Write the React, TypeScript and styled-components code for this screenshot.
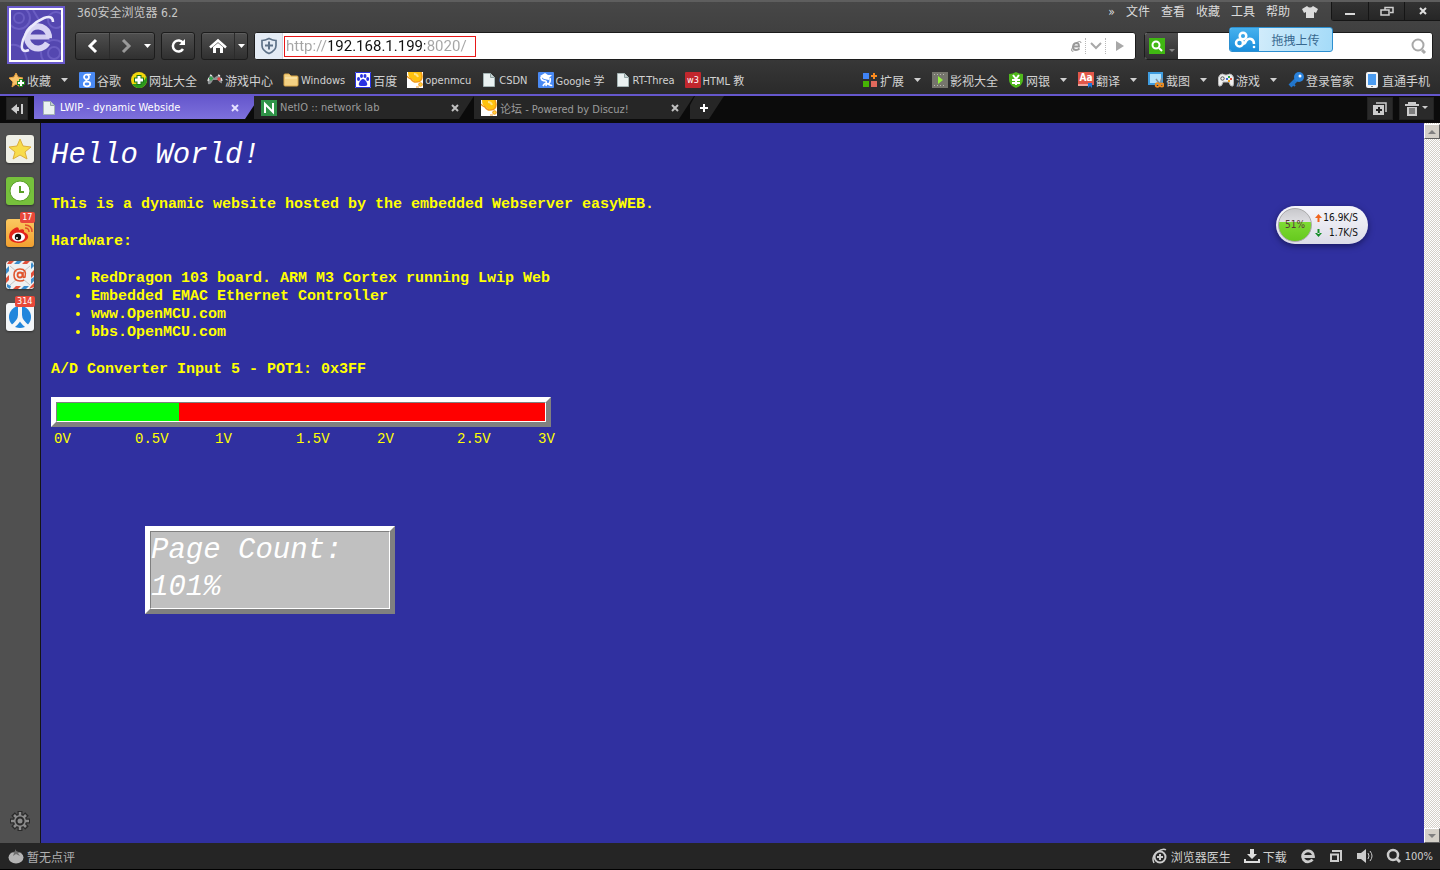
import React from "react";
import styled, { createGlobalStyle, css } from "styled-components";

const UI_FONT = `"DejaVu Sans Condensed", "Noto Sans CJK SC", sans-serif`;
const MONO_FONT = `"Liberation Mono", monospace`;

const GlobalStyle = createGlobalStyle`
  * { box-sizing: border-box; }
  body { margin: 0; background: #0b0b0b; font-family: ${UI_FONT}; font-size: 12px; color: #d4d4d4; }
  button, input { font: inherit; color: inherit; margin: 0; padding: 0; border: 0; background: none; outline: 0; }
  button { display: flex; align-items: center; justify-content: center; }
  a { color: inherit; text-decoration: none; }
  svg { display: block; flex: none; }
`;

/* ---------- window frame ---------- */

const Window = styled.div`
  display: flex;
  flex-direction: column;
  min-height: 100vh;
`;

const Header = styled.header`
  height: 96px;
  display: flex;
  flex-direction: column;
  position: relative;
  background: linear-gradient(#474747, #3c3c3c 50%, #2a2a2a);
  border-top: 2px solid #5e5e5e;
  border-bottom: 2px solid #6557cc;
`;

const HeaderTop = styled.div`
  display: flex;
  height: 62px;
  flex: none;
`;

const Logo = styled.div`
  width: 58px;
  height: 58px;
  margin: 4px 10px 0 7px;
  border: 2px solid #6a5acd;
  background: #fff;
  padding: 2px;
  flex: none;
`;

const HeaderRows = styled.div`
  flex: 1;
  min-width: 0;
`;

const TitleRow = styled.div`
  display: flex;
  height: 30px;
  align-items: flex-start;
`;

const WindowTitle = styled.span`
  margin-left: 2px;
  line-height: 22px;
  color: #c8c8c8;
`;

const MenuBar = styled.nav`
  display: flex;
  align-items: center;
  gap: 11px;
  height: 20px;
  margin-left: auto;
  margin-right: 12px;
`;

const MenuButton = styled.button`
  line-height: 20px;
  color: #dcdcdc;
`;

const WindowButtons = styled.div`
  display: flex;
  border-left: 1px solid #151515;
  border-bottom: 1px solid #151515;
  border-bottom-left-radius: 3px;
`;

const WindowButton = styled.button`
  width: 36px;
  height: 18px;
  background: linear-gradient(#333, #262626);
  & + & { border-left: 1px solid #151515; }
`;

/* ---------- navigation row ---------- */

const NavRow = styled.div`
  display: flex;
  height: 28px;
  padding-right: 7px;
`;

const ButtonGroup = styled.div`
  display: flex;
  border: 1px solid #1c1c1c;
  border-radius: 3px;
  margin-right: 6px;
  background: linear-gradient(#4f4f4f, #303030);
  box-shadow: inset 0 1px 0 #5e5e5e;
`;

const NavButton = styled.button<{ $width: number; $divided?: boolean }>`
  width: ${(p) => p.$width}px;
  ${(p) => p.$divided && css`border-left: 1px solid #2b2b2b;`}
`;

const AddressBar = styled.div`
  flex: 1;
  display: flex;
  align-items: center;
  background: #fff;
  border: 1px solid #1c1c1c;
  border-radius: 3px;
  overflow: hidden;
  margin-right: 8px;
`;

const ShieldButton = styled.button`
  width: 28px;
  align-self: stretch;
  background: #e4ebf4;
  border-right: 1px solid #cfd6e0;
`;

const UrlBox = styled.div`
  display: flex;
  margin-left: 1px;
  border: 1px solid #e81818;
`;

/* The host part of the address is dark, the scheme and the port are muted. */
const UrlInput = styled.input`
  width: 190px;
  height: 19px;
  padding-left: 1px;
  font-family: Roboto, sans-serif;
  font-size: 15px;
  background: linear-gradient(90deg, #a4a4a4 44px, #111 44px, #111 140px, #a4a4a4 140px) text;
  color: transparent;
`;

const AddressTools = styled.div`
  display: flex;
  align-items: center;
  margin-left: auto;
  margin-right: 2px;
`;

const AddressTool = styled.button<{ $width: number }>`
  width: ${(p) => p.$width}px;
  height: 16px;
  & + & { border-left: 1px dotted #b8b8b8; }
`;

const SearchBar = styled.div`
  width: 289px;
  display: flex;
  align-items: center;
  border: 1px solid #1c1c1c;
  border-radius: 3px;
  overflow: hidden;
  background: #fff;
`;

const SearchEngine = styled.button`
  width: 33px;
  align-self: stretch;
  gap: 4px;
  background: linear-gradient(#4f4f4f, #303030);
`;

const SearchInput = styled.input`
  flex: 1;
  min-width: 0;
  color: #222;
`;

const SearchSubmit = styled.button`
  width: 26px;
  height: 26px;
`;

const UploadWidget = styled.button`
  position: absolute;
  top: 25px;
  right: 107px;
  width: 104px;
  height: 25px;
  border: 1px solid #2c8fd0;
  border-radius: 3px;
  overflow: hidden;
  color: #37688f;
  background: linear-gradient(100deg, #e2f2fc, #a4dbf8);
`;

const UploadIcon = styled.span`
  width: 29px;
  height: 23px;
  display: flex;
  align-items: center;
  justify-content: center;
  background: linear-gradient(#47b1ee, #1b8fdc);
`;

const UploadLabel = styled.span`
  flex: 1;
`;

/* ---------- bookmarks ---------- */

const Bookmarks = styled.nav`
  display: flex;
  justify-content: space-between;
  align-items: center;
  height: 30px;
  padding: 2px 10px 0 9px;
`;

const BookmarkGroup = styled.div`
  display: flex;
  gap: 10px;
`;

const Bookmark = styled.a`
  display: flex;
  align-items: center;
  gap: 2px;
  height: 20px;
  white-space: nowrap;
  color: #d2d2d2;
`;

const BookmarkLabel = styled.span<{ $small?: boolean }>`
  font-size: ${(p) => (p.$small ? 11 : 12)}px;
`;

const DropSlot = styled.span`
  display: flex;
  padding: 0 1px 0 8px;
`;

/* ---------- tabs ---------- */

const TabStrip = styled.div`
  display: flex;
  height: 27px;
  padding: 0 6px;
  background: #0b0b0b;
`;

const StripButton = styled.button<{ $width: number }>`
  width: ${(p) => p.$width}px;
  height: 23px;
  margin-top: 1px;
  gap: 3px;
  background: #2a2a2a;
  border: 1px solid #222;
`;

const Tabs = styled.div`
  display: flex;
  margin-left: 6px;
`;

const Tab = styled.div<{ $active?: boolean }>`
  display: flex;
  align-items: center;
  width: ${(p) => (p.$active ? 226 : 220)}px;
  height: 23px;
  padding-left: 7px;
  padding-right: ${(p) => (p.$active ? 19 : 13)}px;
  margin-right: ${(p) => (p.$active ? -6 : 0)}px;
  font-size: 11px;
  color: ${(p) => (p.$active ? "#fff" : "#9b9b9b")};
  background: ${(p) => (p.$active ? "linear-gradient(#6557cc, #7d70dc)" : "#262626")};
  clip-path: polygon(0 0, 100% 0, calc(100% - 15px) 100%, 0 100%);
`;

const TabLabel = styled.button`
  flex: 1;
  justify-content: flex-start;
  gap: 3px;
  height: 23px;
  white-space: nowrap;
`;

const TabClose = styled.button`
  width: 12px;
  height: 12px;
`;

const NewTab = styled.button`
  width: 34px;
  height: 23px;
  margin-left: -4px;
  padding-right: 6px;
  background: #262626;
  clip-path: polygon(5px 0, 100% 0, calc(100% - 15px) 100%, 0 100%, 0 40%);
`;

const StripRight = styled.div`
  display: flex;
  gap: 6px;
  margin-left: auto;
`;

/* ---------- body ---------- */

const Main = styled.div`
  flex: 1;
  display: flex;
`;

const Sidebar = styled.aside`
  width: 41px;
  display: flex;
  flex-direction: column;
  align-items: center;
  gap: 14px;
  padding: 12px 1px 12px 0;
  background: #505050;
  border-right: 1px solid #151515;
`;

const SideButton = styled.button<{ $bg: string }>`
  position: relative;
  width: 28px;
  height: 28px;
  border-radius: 3px;
  background: ${(p) => p.$bg};
  box-shadow: 0 1px 2px rgba(0, 0, 0, 0.4);
`;

const SettingsButton = styled.button`
  margin-top: auto;
`;

const Badge = styled.span`
  position: absolute;
  top: -7px;
  right: -1px;
  padding: 0 2px;
  height: 11px;
  line-height: 11px;
  font-size: 9px;
  color: #fff;
  background: #e8483a;
  border-radius: 2px;
`;

const Page = styled.main`
  position: relative;
  flex: 1;
  padding: 14px 10px 20px;
  background: #3030a0;
  color: #ffff00;
  font-family: ${MONO_FONT};
  font-size: 15px;
  line-height: 18px;
`;

const Heading = styled.h1`
  margin: 0 0 21px;
  font-size: 29px;
  line-height: 38px;
  font-weight: 400;
  font-style: italic;
  color: #fff;
`;

const Paragraph = styled.p`
  margin: 0 0 19px;
  font-weight: 700;
`;

const HardwareList = styled.ul`
  margin: 0 0 19px;
  padding-left: 40px;
  font-weight: 700;
`;

const bevel = css`
  border: 5px solid;
  border-color: #fff #808080 #808080 #fff;
`;

const innerBevel = css`
  border: 1px solid;
  border-color: #808080 #fff #fff #808080;
`;

const Meter = styled.div`
  ${bevel}
  width: 500px;
  height: 30px;
  margin-top: -1px;
`;

const MeterTrack = styled.div`
  ${innerBevel}
  height: 20px;
  background: #ff0000;
`;

const MeterFill = styled.div`
  height: 100%;
  background: #00ff00;
`;

const Scale = styled.div`
  display: grid;
  grid-template-columns: repeat(2, 81px 80px 81px) auto;
  margin: 3px 0 78px 3px;
  font-size: 14px;
`;

const CountFrame = styled.div`
  ${bevel}
  width: 250px;
  height: 88px;
  margin-left: 94px;
`;

const CountText = styled.div`
  ${innerBevel}
  height: 78px;
  background: #c0c0c0;
  color: #fff;
  font-size: 29px;
  line-height: 37px;
  font-style: italic;
`;

const SpeedWidget = styled.div`
  position: absolute;
  top: 83px;
  right: 56px;
  width: 92px;
  height: 38px;
  display: flex;
  align-items: center;
  padding-left: 2px;
  gap: 3px;
  border-radius: 19px;
  background: linear-gradient(#f6f6fb, #dcdce8);
  box-shadow: 0 2px 6px rgba(0, 0, 30, 0.5);
  font-family: ${UI_FONT};
  font-size: 10px;
  color: #111;
`;

const SpeedBall = styled.div`
  width: 34px;
  height: 34px;
  display: flex;
  align-items: center;
  justify-content: center;
  border-radius: 50%;
  border: 1px solid #aaa;
  color: #5a3a3a;
  background: linear-gradient(#c8c8cc, #dedee2 40%, #7edb34 40%, #66c91e);
`;

const SpeedLines = styled.div`
  width: 43px;
`;

const SpeedLine = styled.div`
  display: flex;
  align-items: center;
  justify-content: space-between;
  height: 15px;
`;

const ScrollBar = styled.div`
  width: 16px;
  display: flex;
  flex-direction: column;
  justify-content: space-between;
  padding-top: 1px;
  background: repeating-conic-gradient(#fff 0 25%, #d4d0c8 0 50%) 0 0 / 2px 2px;
`;

const ScrollButton = styled.button`
  width: 16px;
  height: 15px;
  background: #d4d0c8;
  border: 1px solid;
  border-color: #fff #606060 #606060 #fff;
`;

/* ---------- status bar ---------- */

const StatusBar = styled.footer`
  display: flex;
  align-items: center;
  justify-content: space-between;
  height: 27px;
  padding: 0 7px 0 8px;
  background: #252525;
  border-bottom: 1px solid #000;
  color: #b8b8b8;
`;

const StatusTools = styled.div`
  display: flex;
  align-items: center;
  gap: 13px;
`;

const StatusButton = styled.button<{ $small?: boolean; $muted?: boolean }>`
  gap: 3px;
  font-size: ${(p) => (p.$small ? 11 : 12)}px;
  color: ${(p) => (p.$muted ? "#b0b0b0" : "#d0d0d0")};
`;

/* ---------- icons ---------- */

type IconProps = { w?: number; h?: number; children: React.ReactNode };
const Icon = ({ w = 16, h = 16, children }: IconProps) => (
  <svg width={w} height={h} viewBox={`0 0 ${w} ${h}`} fill="none" aria-hidden="true">
    {children}
  </svg>
);

const Caret = ({ color = "#d0d0d0" }: { color?: string }) => (
  <Icon w={7} h={4}><path d="M0 0h7L3.500 4z" fill={color} /></Icon>
);

const CloseX = ({ color = "#c8c8c8" }: { color?: string }) => (
  <Icon w={8} h={8}><path d="M1 1l6 6M7 1L1 7" stroke={color} strokeWidth="2" /></Icon>
);

const FileIcon = () => (
  <Icon>
    <path d="M2.500 1.500h7l4 4v9h-11z" fill="#eaf1f1" stroke="#a4b4b4" />
    <path d="M9.500 1.500v4h4" fill="#c3d0d0" stroke="#90a2a2" />
  </Icon>
);

const ForumIcon = () => (
  <Icon>
    <path d="M0 0h16v16H0z" fill="#fff" />
    <path d="M1 0h13q2 4 1 7-1 3-5 3-3 0-5-3Q1 6 1 0z" fill="#ffc20e" />
    <path d="M14 0q2 5 0 8-1 2-5 2-3 0-5-3-3-1-4-3" stroke="#f39a1a" strokeWidth="1.500" />
    <path d="M7 2q3 0 4 3" stroke="#ffe488" strokeWidth="2" />
    <circle cx="13.500" cy="12.500" r="1.800" fill="#ffd23c" stroke="#f29a20" />
    <path d="M9 15h3" stroke="#f29a20" />
  </Icon>
);

const BrowserLogo = () => (
  <Icon w={50} h={50}>
    <path d="M0 0h50v50H0z" fill="#5447b0" />
    <g stroke="#6a5dc2" strokeWidth="2">
      <circle cx="8" cy="8" r="11" />
      <circle cx="8" cy="8" r="5" />
      <circle cx="43" cy="43" r="13" />
      <circle cx="43" cy="43" r="6" />
      <circle cx="45" cy="10" r="8" />
      <path d="M0 35q12-2 16 15M22 0l6 10" />
    </g>
    <path d="M17 27h21.500" stroke="#d2cdf0" strokeWidth="5" />
    <path d="M38 28A11 11 0 1 0 36.500 33" stroke="#d8d4f4" strokeWidth="6" />
    <path d="M42 12Q42 5 33 8 17 15 12 30q-4 14 6 10" stroke="#eceafc" strokeWidth="2.500" />
  </Icon>
);

const BookmarkIcons: Record<string, React.ReactNode> = {
  star: (
    <Icon>
      <path d="M7 1l2 4 5 1-4 4 1 5-4-3-4 3 1-5-4-4 5-1z" fill="#f8c46c" stroke="#e9a13c" />
      <path d="M8 11h8M12 7v8" stroke="#1d8a1d" strokeWidth="4" />
      <path d="M9 11h6M12 8v6" stroke="#fff" strokeWidth="2" />
    </Icon>
  ),
  google: (
    <Icon>
      <rect width="16" height="16" rx="1" fill="#4a8af4" />
      <circle cx="7.500" cy="5" r="2.500" stroke="#fff" strokeWidth="1.700" />
      <path d="M8 2.500h4M8 7.500q-2 1 0 2" stroke="#fff" strokeWidth="1.500" />
      <ellipse cx="8" cy="12" rx="3.200" ry="2.300" stroke="#fff" strokeWidth="1.700" />
    </Icon>
  ),
  plus360: (
    <Icon>
      <circle cx="8" cy="8" r="8" fill="#f4d80c" />
      <path d="M1 12a8 8 0 0014-8Q14 12 1 12z" fill="#2c9a1c" />
      <path d="M3 8h10M8 3v10" stroke="#17761a" strokeWidth="5" />
      <path d="M4 8h8M8 4v8" stroke="#fff" strokeWidth="3" />
    </Icon>
  ),
  gamepadRed: (
    <Icon>
      <path d="M1 12q-1-7 2-8 3-1 4 2 3-3 6-2 2 3 2 7-2 1-4-3H6q-2 5-5 4z" fill="#8d9193" />
      <path d="M3 3l2 1M11 3l2 1M1 9l1-3M14 6l1 3" stroke="#e0e0e0" strokeWidth="1.500" />
      <path d="M2 6.500h4M4 4.500v4" stroke="#2fa84a" strokeWidth="1.500" />
      <circle cx="12" cy="7" r="1.700" fill="#e04444" />
    </Icon>
  ),
  folder: (
    <Icon>
      <path d="M1 3q0-1 1-1h4l2 2h6q1 0 1 1v8q0 1-1 1H2q-1 0-1-1z" fill="#f3d183" stroke="#dba94b" />
      <path d="M2 6h12" stroke="#fdecb8" />
    </Icon>
  ),
  baidu: (
    <Icon>
      <path d="M0 0h16v16H0z" fill="#fff" />
      <path d="M.500.500h15v15H.500z" stroke="#2932e1" />
      <g fill="#2932e1">
        <ellipse cx="3.500" cy="7" rx="1.500" ry="2" />
        <ellipse cx="6.500" cy="4" rx="1.500" ry="2" />
        <ellipse cx="10" cy="4" rx="1.500" ry="2" />
        <ellipse cx="12.700" cy="7" rx="1.500" ry="2" />
        <path d="M8 7q2 0 4 4 1 3-2 3H6q-3 0-2-3 2-4 4-4z" />
      </g>
    </Icon>
  ),
  forum: <ForumIcon />,
  file: <FileIcon />,
  scholar: (
    <Icon>
      <rect width="16" height="16" rx="1" fill="#4a8af4" />
      <path d="M2 4l5-3 3 2h4l-3 3v2L6 7z" fill="#fff" />
      <path d="M3 5q0 4 5 4M12 6q1 5-2 6M8 9q1 2 0 5M5 14q2-4 5-2 3 2 4 1" stroke="#fff" strokeWidth="1.700" />
    </Icon>
  ),
  w3: (
    <Icon>
      <rect width="16" height="16" rx="1" fill="#c1272d" />
      <text x="8" y="11" fontSize="9" fill="#fff" textAnchor="middle">w3</text>
    </Icon>
  ),
  ext: (
    <Icon>
      <path d="M1 1h6v6H1z" fill="#3f83f5" />
      <path d="M1 9h6v6H1z" fill="#46b404" />
      <path d="M9 9h6v6H9z" fill="#e0695c" />
      <path d="M9 4h6M12 1v6" stroke="#fb8b1e" strokeWidth="2" />
    </Icon>
  ),
  film: (
    <Icon>
      <path d="M0 0h16v16H0z" fill="#75756c" />
      <path d="M2 2.500h12M2 13.500h12" stroke="#b8b8b0" strokeDasharray="1 2" />
      <path d="M6 4l5 4-5 4z" fill="#92f03c" />
    </Icon>
  ),
  bank: (
    <Icon>
      <path d="M8 0q3 2 7 2v6q0 5-7 8-7-3-7-8V2q4 0 7-2z" fill="#4fb81c" />
      <path d="M5 3l3 4 3-4M4 8h8M4 11h8M8 7v6" stroke="#fff" strokeWidth="2" />
    </Icon>
  ),
  translate: (
    <Icon>
      <path d="M0 0h16v13H0z" fill="#e2574a" />
      <path d="M0 12h10v2H0z" fill="#f0a49c" />
      <text x="8" y="9" fontSize="10" fontWeight="700" fill="#fff" textAnchor="middle">Aa</text>
      <path d="M10 11h4v5l-2-2-2 2z" fill="#1c78d8" />
    </Icon>
  ),
  capture: (
    <Icon>
      <path d="M1 1h13v11H1z" fill="#b4e2fb" stroke="#3f9de0" strokeWidth="2" />
      <path d="M8 7l3 4M14 6l-2 5" stroke="#8090a0" strokeWidth="1.500" />
      <circle cx="9.500" cy="13" r="1.800" stroke="#f08c1e" strokeWidth="1.800" />
      <circle cx="13.800" cy="13" r="1.600" stroke="#f08c1e" strokeWidth="1.800" />
    </Icon>
  ),
  gamepad: (
    <Icon>
      <path d="M1 14Q-1 6 2 3q2-2 5 0h2q3-2 5 0 3 3 1 11-3 1-4-4H5q-1 5-4 4z" fill="#f0f0f0" stroke="#bbb" />
      <circle cx="4.500" cy="6.500" r="1.700" stroke="#555" />
      <path d="M8 6h2v2H8z" fill="#3a6ae0" />
      <path d="M10 4h2v2h-2z" fill="#2fa84a" />
      <path d="M12 6h2v2h-2z" fill="#e0503a" />
      <path d="M10 8h2v2h-2z" fill="#f0a01e" />
    </Icon>
  ),
  key: (
    <Icon>
      <path d="M9 7l-7 7" stroke="#2276cc" strokeWidth="4" />
      <path d="M5 12l2 2" stroke="#2276cc" strokeWidth="2" />
      <circle cx="11" cy="5" r="5" fill="#2a82dc" />
      <circle cx="12" cy="4" r="1.500" fill="#fff" />
    </Icon>
  ),
  phone: (
    <Icon>
      <rect x="2" y="0" width="12" height="16" rx="2" fill="#f2f4f6" />
      <path d="M4 2h8v11H4z" fill="#4b9cf0" />
      <path d="M7 14.500h2" stroke="#888" />
    </Icon>
  ),
};

type BookmarkItem = { icon: string; label: string; drop?: boolean; small?: boolean };

const leftBookmarks: BookmarkItem[] = [
  { icon: "star", label: "收藏", drop: true },
  { icon: "google", label: "谷歌" },
  { icon: "plus360", label: "网址大全" },
  { icon: "gamepadRed", label: "游戏中心" },
  { icon: "folder", label: "Windows", small: true },
  { icon: "baidu", label: "百度" },
  { icon: "forum", label: "openmcu", small: true },
  { icon: "file", label: "CSDN", small: true },
  { icon: "scholar", label: "Google 学", small: true },
  { icon: "file", label: "RT-Threa", small: true },
  { icon: "w3", label: "HTML 教", small: true },
];

const rightBookmarks: BookmarkItem[] = [
  { icon: "ext", label: "扩展", drop: true },
  { icon: "film", label: "影视大全" },
  { icon: "bank", label: "网银", drop: true },
  { icon: "translate", label: "翻译", drop: true },
  { icon: "capture", label: "截图", drop: true },
  { icon: "gamepad", label: "游戏", drop: true },
  { icon: "key", label: "登录管家" },
  { icon: "phone", label: "直通手机" },
];

const BookmarkList = ({ items }: { items: BookmarkItem[] }) => (
  <BookmarkGroup>
    {items.map((b) => (
      <Bookmark href="#" key={b.label}>
        {BookmarkIcons[b.icon]}
        <BookmarkLabel $small={b.small}>{b.label}</BookmarkLabel>
        {b.drop && <DropSlot><Caret /></DropSlot>}
      </Bookmark>
    ))}
  </BookmarkGroup>
);

const NetIcon = () => (
  <Icon>
    <path d="M0 0h16v16H0z" fill="#2f9448" />
    <path d="M4 13V4l8 8V3" stroke="#fff" strokeWidth="2" />
  </Icon>
);

const tabs = [
  { icon: <FileIcon />, label: "LWIP - dynamic Webside", active: true },
  { icon: <NetIcon />, label: "NetIO :: network lab" },
  { icon: <ForumIcon />, label: "论坛 - Powered by Discuz!" },
];

const hardware = [
  "RedDragon 103 board. ARM M3 Cortex running Lwip Web",
  "Embedded EMAC Ethernet Controller",
  "www.OpenMCU.com",
  "bbs.OpenMCU.com",
];

const scale = ["0V", "0.5V", "1V", "1.5V", "2V", "2.5V", "3V"];

export default function App() {
  const level = 25;
  return (
    <Window>
      <GlobalStyle />
      <Header>
        <HeaderTop>
          <Logo><BrowserLogo /></Logo>
          <HeaderRows>
            <TitleRow>
              <WindowTitle>360安全浏览器 6.2</WindowTitle>
              <MenuBar>
                <MenuButton aria-label="更多">»</MenuButton>
                {["文件", "查看", "收藏", "工具", "帮助"].map((m) => (
                  <MenuButton key={m}>{m}</MenuButton>
                ))}
                <MenuButton aria-label="皮肤">
                  <Icon w={18} h={14}>
                    <path d="M6 1q3 3 6 0l5 3-2 4-2-1v6H5V7L3 8 1 4z" fill="#dcdcdc" />
                  </Icon>
                </MenuButton>
              </MenuBar>
              <WindowButtons>
                <WindowButton aria-label="最小化">
                  <Icon w={12} h={10}><path d="M1 8h10" stroke="#d8d8d8" strokeWidth="2" /></Icon>
                </WindowButton>
                <WindowButton aria-label="还原">
                  <Icon w={14} h={11}>
                    <path d="M5 4V1.500h8v5h-3" stroke="#d0d0d0" strokeWidth="1.500" />
                    <path d="M1 4h8v5H1z" stroke="#d0d0d0" strokeWidth="1.500" />
                  </Icon>
                </WindowButton>
                <WindowButton aria-label="关闭"><CloseX color="#e0e0e0" /></WindowButton>
              </WindowButtons>
            </TitleRow>
            <NavRow>
              <ButtonGroup>
                <NavButton $width={33} aria-label="后退">
                  <Icon><path d="M11 2L5 8l6 6" stroke="#fff" strokeWidth="3" /></Icon>
                </NavButton>
                <NavButton $width={32} $divided aria-label="前进">
                  <Icon><path d="M5 2l6 6-6 6" stroke="#999" strokeWidth="3" /></Icon>
                </NavButton>
                <NavButton $width={13} aria-label="历史"><Caret color="#fff" /></NavButton>
              </ButtonGroup>
              <ButtonGroup>
                <NavButton $width={32} aria-label="刷新">
                  <Icon>
                    <path d="M13 11a5.500 5.500 0 110-6" stroke="#fff" strokeWidth="2.500" />
                    <path d="M15 1v6H9z" fill="#fff" />
                  </Icon>
                </NavButton>
              </ButtonGroup>
              <ButtonGroup>
                <NavButton $width={32} aria-label="主页">
                  <Icon w={18} h={16}>
                    <path d="M1 9.500l8-7 8 7" stroke="#fff" strokeWidth="2.500" />
                    <path d="M4 9l5-4 5 4v6h-3v-5H7v5H4z" fill="#fff" />
                  </Icon>
                </NavButton>
                <NavButton $width={13} $divided aria-label="主页选项"><Caret color="#fff" /></NavButton>
              </ButtonGroup>
              <AddressBar>
                <ShieldButton aria-label="网站安全">
                  <Icon w={18} h={18}>
                    <path d="M9 1.500q4 2 7 2v5q0 5-7 8-7-3-7-8v-5q3 0 7-2z" stroke="#5e7288" strokeWidth="1.700" />
                    <path d="M5 8.500h8M9 4.500v8" stroke="#5e7288" strokeWidth="2" />
                  </Icon>
                </ShieldButton>
                <UrlBox>
                  <UrlInput aria-label="地址" defaultValue="http://192.168.1.199:8020/" spellCheck={false} />
                </UrlBox>
                <AddressTools>
                  <AddressTool $width={18} aria-label="兼容模式">
                    <Icon w={12} h={12}>
                      <path d="M3.500 6.500H9Q9 3 6.500 3 3 3.500 3 7q0 3 3 3 2 0 3.500-1.500" stroke="#999" strokeWidth="1.800" />
                      <path d="M11 3q0-3-5 0-4 3-4.500 7 0 2 2 1" stroke="#999" />
                    </Icon>
                  </AddressTool>
                  <AddressTool $width={20} aria-label="网址列表">
                    <Icon w={12} h={8}><path d="M1 1l5 5 5-5" stroke="#a8a8a8" strokeWidth="2" /></Icon>
                  </AddressTool>
                  <AddressTool $width={28} aria-label="转到">
                    <Icon w={10} h={10}><path d="M1 0l8 5-8 5z" fill="#a8a8a8" /></Icon>
                  </AddressTool>
                </AddressTools>
              </AddressBar>
              <SearchBar>
                <SearchEngine aria-label="搜索引擎">
                  <Icon>
                    <path d="M0 0h16v16H0z" fill="#40b812" />
                    <circle cx="7" cy="7" r="3.500" stroke="#fff" strokeWidth="2" />
                    <path d="M10 10l3 3" stroke="#fff" strokeWidth="2" />
                  </Icon>
                  <Icon w={6} h={14}><path d="M0 10h6l-3 3z" fill="#888" /></Icon>
                </SearchEngine>
                <SearchInput aria-label="搜索" />
                <SearchSubmit aria-label="搜索">
                  <Icon>
                    <circle cx="7" cy="7" r="5.500" stroke="#a8a8a8" strokeWidth="2" />
                    <path d="M11 12l3 3" stroke="#a8a8a8" strokeWidth="3" />
                  </Icon>
                </SearchSubmit>
              </SearchBar>
            </NavRow>
          </HeaderRows>
        </HeaderTop>
        <Bookmarks aria-label="收藏栏">
          <BookmarkList items={leftBookmarks} />
          <BookmarkList items={rightBookmarks} />
        </Bookmarks>
        <UploadWidget>
          <UploadIcon>
            <Icon w={22} h={18}>
              <circle cx="5.500" cy="12" r="3.500" stroke="#fff" strokeWidth="2.500" />
              <circle cx="9" cy="5" r="3.300" stroke="#fff" strokeWidth="2.500" />
              <path d="M8 13q3 0 4-3 2-3 5-2 3 1 3 5" stroke="#fff" strokeWidth="2.500" />
              <circle cx="20" cy="16" r="1.300" fill="#fff" />
            </Icon>
          </UploadIcon>
          <UploadLabel>拖拽上传</UploadLabel>
        </UploadWidget>
      </Header>

      <TabStrip>
        <StripButton $width={22} aria-label="收起侧栏">
          <Icon w={14} h={12}>
            <path d="M1 6l6-5v3h2v4H7v3z" fill="#ccc" />
            <path d="M12 1v10" stroke="#ccc" strokeWidth="2" />
          </Icon>
        </StripButton>
        <Tabs>
          {tabs.map((t) => (
            <Tab key={t.label} $active={t.active}>
              <TabLabel>{t.icon}{t.label}</TabLabel>
              <TabClose aria-label="关闭标签"><CloseX color={t.active ? "#e4e0ff" : "#c0c0c0"} /></TabClose>
            </Tab>
          ))}
          <NewTab aria-label="新建标签">
            <Icon w={10} h={10}><path d="M1 5h8M5 1v8" stroke="#fff" strokeWidth="2" /></Icon>
          </NewTab>
        </Tabs>
        <StripRight>
          <StripButton $width={26} aria-label="恢复标签">
            <Icon w={14} h={13}>
              <path d="M3 1h10v9" stroke="#ccc" strokeWidth="1.500" />
              <path d="M0 3h11v10H0z" fill="#ccc" />
              <path d="M3 8h6M6 5v6" stroke="#222" strokeWidth="2" />
            </Icon>
          </StripButton>
          <StripButton $width={35} aria-label="清理">
            <Icon w={14} h={14}>
              <path d="M0 3h14M4 3V1h6v2" stroke="#ccc" strokeWidth="2" />
              <path d="M2 5h10v9H2z" fill="#ccc" />
              <path d="M5 6v6M7 6v6M9 6v6" stroke="#333" />
            </Icon>
            <Icon w={6} h={8}><path d="M0 1h6L3 4z" fill="#ccc" /></Icon>
          </StripButton>
        </StripRight>
      </TabStrip>

      <Main>
        <Sidebar>
          <SideButton $bg="#efefe6" aria-label="收藏夹">
            <Icon w={24} h={24}>
              <path d="M12 2l3 7 8 1-6 5 2 7-7-4-7 4 2-7-6-5 8-1z" fill="#f8dc4c" stroke="#dcae3c" strokeLinejoin="round" />
            </Icon>
          </SideButton>
          <SideButton $bg="#76c03c" aria-label="历史">
            <Icon w={24} h={24}>
              <circle cx="12" cy="12" r="10" fill="#fff" stroke="#5aa028" />
              <path d="M12 7v6h4" stroke="#5aa028" strokeWidth="2" />
            </Icon>
          </SideButton>
          <SideButton $bg="linear-gradient(#fbc860, #f2a030)" aria-label="微博">
            <Icon w={26} h={26}>
              <path d="M2 17q0-6 6-9 4-2 4 2 6-2 5 2 5 2 4 6-3 5-10 5-9-1-9-6z" fill="#e2231a" />
              <ellipse cx="11.500" cy="17" rx="6.500" ry="4.500" fill="#fff" />
              <circle cx="11" cy="17" r="3.200" fill="#111" />
              <circle cx="10" cy="18" r="1" fill="#fff" />
              <path d="M18 8q4 0 4 4M18 5q7 0 7 7" stroke="#e0502a" strokeWidth="1.500" />
            </Icon>
            <Badge>17</Badge>
          </SideButton>
          <SideButton $bg="#f0f0f0" aria-label="邮箱">
            <Icon w={28} h={28}>
              <path d="M3 0h5L5 3H1zM19 0h5l-3 3h-5zM28 9v5l-3 3v-5zM28 22v4l-5 2 2-3zM12 28H7l3-3h5zM0 22v-5l3-3v5z" fill="#e0503a" />
              <path d="M11 0h5l-3 3H8zM26 1l2 4-3 3V3zM28 16v4l-3 3v-5zM20 28h-5l3-3h5zM4 28l-3-2v-3l4 2zM0 13V8l3-3v5z" fill="#3a8ccc" />
              <path d="M4 5l7 6M24 5l-7 6M4 24l7-6M24 24l-7-6" stroke="#c4c4c4" />
              <circle cx="14" cy="14" r="2.500" stroke="#e0562f" strokeWidth="1.800" />
              <path d="M17 11v4q0 2 2 1 2-8-5-8-6 0-6 6t6 6q3 0 4-1" stroke="#e0562f" strokeWidth="1.600" />
            </Icon>
          </SideButton>
          <SideButton $bg="#f4f6f8" aria-label="人人">
            <Icon w={24} h={24}>
              <circle cx="12" cy="12" r="11" fill="#2186dc" />
              <path d="M12 0v10q0 6-8 12M12 10q0 6 8 12" stroke="#f4f6f8" strokeWidth="4" />
            </Icon>
            <Badge>314</Badge>
          </SideButton>
          <SettingsButton aria-label="设置">
            <Icon w={20} h={20}>
              <circle cx="10" cy="10" r="7" fill="#2a2a2a" />
              <path d="M10 0v20M0 10h20M3 3l14 14M17 3L3 17" stroke="#2a2a2a" strokeWidth="5" />
              <path d="M10 1v18M1 10h18M4 4l12 12M16 4L4 16" stroke="#8c8c8c" strokeWidth="2.500" />
              <circle cx="10" cy="10" r="6" fill="#8c8c8c" />
              <circle cx="10" cy="10" r="3.500" fill="#8c8c8c" stroke="#2a2a2a" strokeWidth="2" />
            </Icon>
          </SettingsButton>
        </Sidebar>

        <Page>
          <Heading>Hello World!</Heading>
          <Paragraph>This is a dynamic website hosted by the embedded Webserver easyWEB.</Paragraph>
          <Paragraph>Hardware:</Paragraph>
          <HardwareList>
            {hardware.map((h) => <li key={h}>{h}</li>)}
          </HardwareList>
          <Paragraph>A/D Converter Input 5 - POT1: 0x3FF</Paragraph>
          <Meter>
            <MeterTrack><MeterFill style={{ width: `${level}%` }} /></MeterTrack>
          </Meter>
          <Scale>{scale.map((s) => <span key={s}>{s}</span>)}</Scale>
          <CountFrame>
            <CountText>Page Count:<br />101%</CountText>
          </CountFrame>

          <SpeedWidget>
            <SpeedBall>51%</SpeedBall>
            <SpeedLines>
              <SpeedLine>
                <Icon w={7} h={8}><path d="M3.500 0L7 4H0zM2.500 3h2v5h-2z" fill="#f0641e" /></Icon>
                <span>16.9K/S</span>
              </SpeedLine>
              <SpeedLine>
                <Icon w={7} h={8}><path d="M3.500 8L7 4H0zM2.500 0h2v5h-2z" fill="#148c28" /></Icon>
                <span>1.7K/S</span>
              </SpeedLine>
            </SpeedLines>
          </SpeedWidget>
        </Page>

        <ScrollBar>
          <ScrollButton aria-label="向上滚动"><Icon w={8} h={4}><path d="M0 4h8L4 0z" fill="#808080" /></Icon></ScrollButton>
          <ScrollButton aria-label="向下滚动"><Icon w={8} h={4}><path d="M0 0h8L4 4z" fill="#808080" /></Icon></ScrollButton>
        </ScrollBar>
      </Main>

      <StatusBar>
        <StatusButton $muted>
          <Icon>
            <ellipse cx="8" cy="9.500" rx="7.500" ry="6" fill="#b4b4b4" />
            <path d="M2 5l5-1 0-3 2 3 5 0-4 1 2 3-4-2-3 2 1-3z" fill="#6e6e6e" />
          </Icon>
          暂无点评
        </StatusButton>
        <StatusTools>
          <StatusButton>
            <Icon>
              <circle cx="8" cy="9" r="5.500" stroke="#ccc" strokeWidth="2" />
              <path d="M5 9h6M8 6v6" stroke="#ccc" strokeWidth="2" />
              <path d="M2 15Q-1 9 5 4q6-4 9-2" stroke="#ccc" strokeWidth="1.500" />
            </Icon>
            浏览器医生
          </StatusButton>
          <StatusButton>
            <Icon>
              <path d="M8 11L3 6h3V1h4v5h3z" fill="#ddd" />
              <path d="M1 11v3h14v-3" stroke="#ddd" strokeWidth="2" />
            </Icon>
            下载
          </StatusButton>
          <StatusButton aria-label="浏览器模式">
            <Icon>
              <path d="M3 8.500h10.500A5.500 5.500 0 1 0 12.500 11.500" stroke="#ccc" strokeWidth="2.800" />
            </Icon>
          </StatusButton>
          <StatusButton aria-label="窗口">
            <Icon w={15} h={14}>
              <path d="M3 2h9v10" stroke="#ccc" strokeWidth="2" />
              <path d="M2 5.500h7V12H2z" stroke="#ccc" strokeWidth="2" />
            </Icon>
          </StatusButton>
          <StatusButton aria-label="声音">
            <Icon>
              <path d="M0 5h4l5-4v14l-5-4H0z" fill="#ccc" />
              <path d="M11 5q2 3 0 6M13 3q4 5 0 10" stroke="#ccc" />
            </Icon>
          </StatusButton>
          <StatusButton $small>
            <Icon>
              <circle cx="7" cy="7" r="5" stroke="#ccc" strokeWidth="2.500" />
              <path d="M11 11l3 3" stroke="#ccc" strokeWidth="3" />
            </Icon>
            100%
          </StatusButton>
        </StatusTools>
      </StatusBar>
    </Window>
  );
}
